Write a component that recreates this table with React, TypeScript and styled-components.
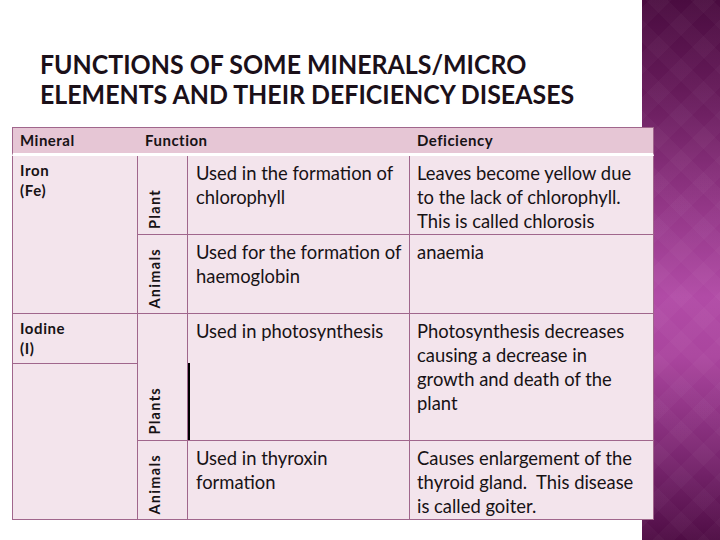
import React from "react";
import styled, { createGlobalStyle } from "styled-components";

const MAUVE = "#a0668c";
const HEAD_BG = "#e6c6d5";
const CELL_BG = "#f3e4ec";
const INK = "#171215";

const GlobalStyle = createGlobalStyle`
  html, body { margin: 0; padding: 0; background: #ffffff; }
  body { font-family: Lato, "Open Sans", sans-serif; }
`;

const Slide = styled.div`
  position: relative;
  width: 720px;
  height: 540px;
  overflow: hidden;
  box-sizing: border-box;
  padding-top: 49px;
  background:
    repeating-linear-gradient(45deg, rgba(255, 255, 255, 0.022) 0 16px, rgba(0, 0, 0, 0) 16px 32px) right top / 78px 100% no-repeat,
    repeating-linear-gradient(-45deg, rgba(255, 255, 255, 0.022) 0 16px, rgba(0, 0, 0, 0) 16px 32px) right top / 78px 100% no-repeat,
    linear-gradient(180deg, #4a0c40 0%, #641a58 16%, #923686 38%, #b14ba6 55%, #aa459e 66%, #7c2872 84%, #4f0d45 100%) right top / 78px 100% no-repeat,
    #ffffff;
`;

const Title = styled.h1`
  margin: 0 0 18px 40px;
  font-family: Lato, "Open Sans", sans-serif;
  font-weight: 700;
  font-size: 26.5px;
  line-height: 30px;
  color: #1b1019;
  white-space: nowrap;
  transform: scaleX(0.94);
  transform-origin: left top;
`;

const Table = styled.div`
  width: 642px;
  margin-left: 12px;
  color: ${INK};
`;

const HeaderRow = styled.div`
  display: grid;
  grid-template-columns: 125px 272px 1fr;
  height: 29px;
  box-sizing: border-box;
  background: ${HEAD_BG};
  border: 1px solid ${MAUVE};
  border-bottom: 3px solid #ffffff;
`;

const HeadCell = styled.div`
  padding-left: 7px;
  font-weight: 700;
  font-size: 15px;
  line-height: 25px;
  letter-spacing: 0.5px;
`;

const Body = styled.div`
  display: grid;
  grid-template-columns: 124px 49px 221px 243px;
  grid-template-rows: 78px 78px 49px 76px 78px;
  gap: 1px;
  padding: 0 1px 1px 1px;
  background: ${MAUVE};
`;

const Cell = styled.div<{ $col: string; $row: string }>`
  grid-column: ${(p) => p.$col};
  grid-row: ${(p) => p.$row};
  background: ${CELL_BG};
  box-sizing: border-box;
`;

const MineralCell = styled(Cell)`
  padding: 4px 7px 0 7px;
  font-weight: 700;
  font-size: 15px;
  line-height: 20px;
  letter-spacing: 0.6px;
`;

const LabelCell = styled(Cell)`
  display: flex;
  align-items: flex-end;
  padding: 0 0 5px 7px;
`;

const VerticalLabel = styled.span`
  writing-mode: vertical-rl;
  transform: rotate(180deg);
  font-weight: 700;
  font-size: 14.5px;
  line-height: 20px;
  letter-spacing: 1.3px;
`;

const TextCell = styled(Cell)`
  padding: 5px 3px 0 8px;
  font-size: 18.4px;
  line-height: 24px;
`;

const MarkedTextCell = styled(TextCell)`
  background:
    linear-gradient(#000000, #000000) left 0 top 49px / 2px calc(100% - 49px) no-repeat,
    ${CELL_BG};
`;

const DefCell = styled(Cell)`
  padding: 5px 3px 0 7px;
  font-size: 18.4px;
  line-height: 24px;
`;

export default function App() {
  return (
    <>
      <GlobalStyle />
      <Slide>
        <Title>
          FUNCTIONS OF SOME MINERALS/MICRO
          <br />
          ELEMENTS AND THEIR DEFICIENCY DISEASES
        </Title>
        <Table>
          <HeaderRow>
            <HeadCell>Mineral</HeadCell>
            <HeadCell>Function</HeadCell>
            <HeadCell>Deficiency</HeadCell>
          </HeaderRow>
          <Body>
            <MineralCell $col="1" $row="1 / 3">
              Iron
              <br />
              (Fe)
            </MineralCell>
            <LabelCell $col="2" $row="1">
              <VerticalLabel>Plant</VerticalLabel>
            </LabelCell>
            <TextCell $col="3" $row="1">
              Used in the formation of chlorophyll
            </TextCell>
            <DefCell $col="4" $row="1">
              Leaves become yellow due
              <br />
              to the lack of chlorophyll.
              <br />
              This is called chlorosis
            </DefCell>

            <LabelCell $col="2" $row="2">
              <VerticalLabel>Animals</VerticalLabel>
            </LabelCell>
            <TextCell $col="3" $row="2">
              Used for the formation of haemoglobin
            </TextCell>
            <DefCell $col="4" $row="2">
              anaemia
            </DefCell>

            <MineralCell $col="1" $row="3">
              Iodine
              <br />
              (I)
            </MineralCell>
            <Cell $col="1" $row="4 / 6" />
            <LabelCell $col="2" $row="3 / 5">
              <VerticalLabel>Plants</VerticalLabel>
            </LabelCell>
            <MarkedTextCell $col="3" $row="3 / 5">
              Used in photosynthesis
            </MarkedTextCell>
            <DefCell $col="4" $row="3 / 5">
              Photosynthesis decreases
              <br />
              causing a decrease in
              <br />
              growth and death of the
              <br />
              plant
            </DefCell>

            <LabelCell $col="2" $row="5">
              <VerticalLabel>Animals</VerticalLabel>
            </LabelCell>
            <TextCell $col="3" $row="5">
              Used in thyroxin
              <br />
              formation
            </TextCell>
            <DefCell $col="4" $row="5">
              Causes enlargement of the
              <br />
              thyroid gland.&nbsp; This disease
              <br />
              is called goiter.
            </DefCell>
          </Body>
        </Table>
      </Slide>
    </>
  );
}
